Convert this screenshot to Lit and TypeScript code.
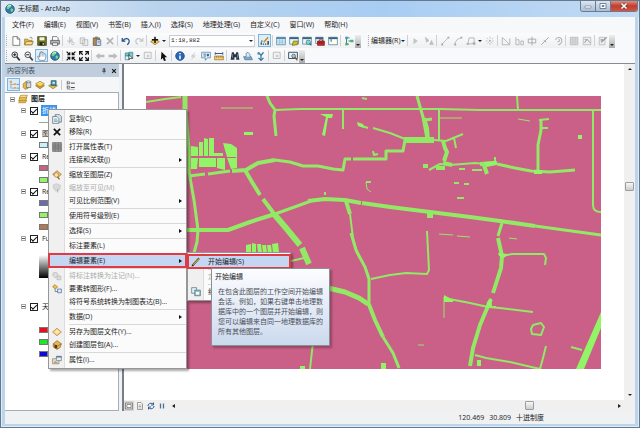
import { LitElement, html, svg, css, nothing } from "lit";
import { customElement, property } from "lit/decorators.js";
import { classMap } from "lit/directives/class-map.js";

const icons: Record<string, unknown> = {
  page: svg`<path d="M3 1h7l4 4v10H3z" fill="#fff" stroke="#444"/><path d="M10 1v4h4" fill="none" stroke="#444"/>`,
  open: svg`<path d="M1 14V5h5l1 2h6v7z" fill="#e8b840" stroke="#8a6414"/><path d="M1 14l3-5h11l-3 5z" fill="#ffe08a" stroke="#8a6414"/><path d="M9 3c2-2 4-1 4 2" fill="none" stroke="#555"/>`,
  save: svg`<path d="M1 1h14v14H1z" fill="#6d7424" stroke="#30340c"/><path d="M4 2h8v5H4z" fill="#f2f4e0"/><path d="M4 10h8v5H4z" fill="#262814"/><path d="M9 11h2v3H9z" fill="#ddd"/>`,
  print: svg`<path d="M4 7V1h7l2 2v4" fill="#fff" stroke="#444"/><path d="M1 7h14v6H1z" fill="#b9b9b9" stroke="#333"/><path d="M4 11h8v4H4z" fill="#fff" stroke="#333"/>`,
  cut: svg`<path d="M6 1v9M10 4L5 12M2 8h9" fill="none" stroke="#c4c4c4" stroke-width="2"/><circle cx="11" cy="12" r="2" fill="none" stroke="#c4c4c4" stroke-width="1.5"/>`,
  copyGray: svg`<path d="M2 3h7v9H2zM6 6h8v9H6z" fill="#eee" stroke="#bbb" stroke-width="1.5"/>`,
  paste: svg`<path d="M2 3h10v12H2z" fill="#a88a5c" stroke="#5b452a"/><path d="M5 1h4v3H5z" fill="#777"/><path d="M7 6h7v9H7z" fill="#dfe8f7" stroke="#44556b"/><path d="M9 9h4M9 11h4" stroke="#5b78a5"/>`,
  xGray: svg`<path d="M3 3l10 10M13 3L3 13" stroke="#b4b4b4" stroke-width="2.4"/>`,
  undo: svg`<path d="M2 3v5h5" fill="none" stroke="#1f4f88" stroke-width="2"/><path d="M3 8c3-6 11-4 10 1 0 2-1 3-3 5" fill="none" stroke="#1f4f88" stroke-width="2"/>`,
  redo: svg`<path d="M14 3v5H9M13 8C10 2 2 4 3 9c0 2 1 3 3 4" fill="none" stroke="#c6c6c6" stroke-width="2"/>`,
  add: svg`<path d="M8 5l7 4-7 5-7-5z" fill="#f0c85c" stroke="#8a6a1c"/><path d="M8 1v10M3 6h10" stroke="#111" stroke-width="2.4"/>`,
  sketch: svg`<path d="M1 13h11M2 8h3M1 11h3" stroke="#444" stroke-dasharray="2 1.5" stroke-width="2"/><path d="M6 10l7-8" stroke="#c98b24" stroke-width="2.4"/><path d="M13 8v6" stroke="#222" stroke-width="2"/>`,
  table: svg`<path d="M1 2h14v12H1z" fill="#f5fbff" stroke="#2e688f"/><path d="M1 2h14v3H1z" fill="#4485ae"/><path d="M1 8h14M1 11h14M6 3v11M10 3v11" stroke="#6eaacb"/>`,
  catalog: svg`<path d="M1 2h14v11H1z" fill="#eef6fb" stroke="#2e688f"/><path d="M1 2h14v3H1z" fill="#35637f"/><path d="M5 15l2-7h8l-2 6z" fill="#c6bf2e" stroke="#686513"/>`,
  search: svg`<path d="M1 2h14v11H1z" fill="#eef6fb" stroke="#2e688f"/><path d="M1 2h14v3H1z" fill="#35637f"/><circle cx="10" cy="10" r="3.5" fill="#90d4c4" stroke="#217c75"/><path d="M12 12l3 3" stroke="#217c75" stroke-width="2"/>`,
  toolbox: svg`<path d="M1 2h12v10H1z" fill="#eef6fb" stroke="#2e688f"/><path d="M1 2h12v3H1z" fill="#35637f"/><path d="M4 8h11v7H4z" fill="#c92727" stroke="#811010"/><path d="M7 8V6h5v2M4 11h11" fill="none" stroke="#611"/>`,
  windowIcon: svg`<path d="M1 2h14v12H1z" fill="#fffdf0" stroke="#2e688f"/><path d="M1 2h14v3H1z" fill="#35637f"/><path d="M4 4h2v5H4z" fill="#4485ae"/>`,
  model: svg`<path d="M4 3v10M4 3h5M4 13h4M7 8h8" stroke="#3a8a6c" stroke-width="1.6"/><path d="M2 1h4v4H2z" fill="#4a93c5"/><path d="M2 11h4v4H2z" fill="#58a860"/><path d="M10 6h5v4h-5z" fill="#50b07c"/>`,
  zoomIn: svg`<circle cx="6" cy="6" r="4.5" fill="#f2f9ff" stroke="#333" stroke-width="1.5"/><path d="M9 9l5 6" stroke="#333" stroke-width="2.6"/><path d="M3.5 6h5M6 3.5v5" stroke="#111" stroke-width="1.5"/>`,
  zoomOut: svg`<circle cx="6" cy="6" r="4.5" fill="#f2f9ff" stroke="#444" stroke-width="1.5"/><path d="M9 9l5 6" stroke="#444" stroke-width="2.6"/><path d="M3.5 6h5" stroke="#111" stroke-width="1.5"/>`,
  hand: svg`<path d="M4 15L1 9c0-2 2-1 3 1V4c0-2 2-2 2 0V2c0-2 2-2 2 0v1c1-2 3-1 3 1v1c1-1 3-1 3 1v5l-2 4z" fill="#fff" stroke="#496578"/><path d="M6 4v5M8.500 3v6M11 5v4" stroke="#7891a2"/>`,
  globe: svg`<circle cx="8" cy="8" r="7" fill="#2b7ba6" stroke="#1c4a70"/><path d="M3 5c2-4 6-4 7-2 0 3-3 2-4 5-2 1-4-1-3-3zM9 8c3-2 5 0 4 2-1 3-4 3-4 1z" fill="#7ed28b"/><path d="M4 4q3-3 6-1" stroke="#e1fff1" stroke-width="1.5" fill="none"/>`,
  shrink: svg`<path d="M1 1l5 5M15 1l-5 5M1 15l5-5M15 15l-5-5M6 2v4H2M10 2v4h4M6 14v-4H2M10 14v-4h4" fill="none" stroke="#111" stroke-width="1.8"/>`,
  expand: svg`<path d="M1 1l5 5M15 1l-5 5M1 15l5-5M15 15l-5-5M1 6V1h5M10 1h5v5M1 10v5h5M15 10v5h-5" fill="none" stroke="#111" stroke-width="1.8"/>`,
  backGray: svg`<path d="M1 8l6-5v3h8v4H7v3z" fill="#bbb"/>`,
  fwdGray: svg`<path d="M15 8L9 3v3H1v4h8v3z" fill="#bbb"/>`,
  selectFeat: svg`<path d="M2 3h6v5H2zM8 2h6v9H8z" fill="#7dcbd1" stroke="#29747c"/><path d="M2 8h6v6H2z" fill="#e9f4f5" stroke="#29747c"/><path d="M8 6l6 6H9l-1 2z" fill="#fff" stroke="#222"/>`,
  boxGray: svg`<path d="M2 2h11v10H2z" fill="#f4f4f4" stroke="#bbb" stroke-width="1.5"/><path d="M6 6h4v4H6z" fill="#ccc"/>`,
  cursor: svg`<path d="M4 1l9 9H9l2 5-3 1-2-5-3 3z" fill="#111"/>`,
  info: svg`<circle cx="8" cy="8" r="7" fill="#2967b4" stroke="#163f78"/><path d="M8 7v6M8 3v2" stroke="#fff" stroke-width="2.4"/>`,
  bolt: svg`<path d="M12 1L4 9h4l-4 6 9-8H9z" fill="#ccc"/>`,
  popup: svg`<path d="M1 2h14v9h-5l-3 4v-4H1z" fill="#e4f0fa" stroke="#3c7097"/><path d="M4 5h4M4 8h4M10 5h2v3h-2z" stroke="#3c7097" stroke-width="1.5"/>`,
  ruler: svg`<path d="M1 8h14v6H1z" fill="#f3cf79" stroke="#8d6520"/><path d="M4 8v3M7 8v3M10 8v3M13 8v3" stroke="#8d6520"/><path d="M2 4h12M2 2v4M14 2v4" stroke="#345b91" stroke-width="1.6"/>`,
  binoculars: svg`<path d="M3 2h3l1 3h2l1-3h3l2 12h-5v-4H7v4H1z" fill="#263445"/><path d="M4 5v6M12 5v6" stroke="#87a4be"/>`,
  route: svg`<path d="M1 9h12l2 5H3z" fill="#7ea8c8" stroke="#376b91"/><path d="M5 9V4l3-2 3 3v4" fill="#d6ebf7" stroke="#376b91"/>`,
  xy: svg`<path d="M4 2l4 5 4-5M8 7v8M4 11l4 4 4-4" fill="none" stroke="#3878a5" stroke-width="2"/><circle cx="4" cy="4" r="2" fill="#4294c8"/>`,
  viewer: svg`<path d="M1 2h14v10H1z" fill="#eaf3f8" stroke="#3c4d5b" stroke-width="1.5"/><circle cx="9" cy="8" r="3" fill="#9bc7e0" stroke="#394b5b"/><path d="M11 10l4 5" stroke="#8c572d" stroke-width="2"/>`,
  edTri: svg`<path d="M4 3l7 5-7 5z" fill="#c4c4c4"/>`,
  edTriA: svg`<path d="M2 2l6 5-4 3zM9 14l3-7 3 7M10 12h4" fill="#bbb" stroke="#bbb"/>`,
  edLine: svg`<path d="M3 13L13 3" stroke="#bbb" stroke-width="1.5"/><path d="M2 12h3v3H2zM12 1h3v3h-3z" fill="#aaa"/>`,
  edArc: svg`<path d="M3 14Q4 4 14 3" fill="none" stroke="#bbb" stroke-width="1.5"/><path d="M2 12h3v3H2zM12 1h3v3h-3z" fill="#aaa"/>`,
  edPoly: svg`<path d="M3 13L5 3h8v9z" fill="none" stroke="#b5b5b5" stroke-width="1.5"/><path d="M1 11h3v3H1zM11 10h4v4h-4z" fill="#aaa"/>`,
  edStar: svg`<path d="M8 1v14M1 8h14M3 3l10 10M13 3L3 13" stroke="#aaa" stroke-dasharray="3 2"/>`,
  edShape: svg`<path d="M2 2v12h12V4M3 3l10 10" fill="none" stroke="#b5b5b5" stroke-width="1.5"/>`,
  edSteps: svg`<path d="M3 2v12h5V6H4M11 14V8h4v6z" fill="none" stroke="#b5b5b5" stroke-width="1.5"/>`,
  edCross: svg`<path d="M8 1v14M2 5h12v6H2z" fill="none" stroke="#aaa" stroke-width="1.5"/>`,
  edSplit: svg`<path d="M2 14L14 2M6 7l4 3" stroke="#aaa" stroke-width="1.6"/>`,
  edRotate: svg`<path d="M4 6c2-6 11-4 10 2 0 5-5 6-6 6M9 5c3 2 1 5-2 4" fill="none" stroke="#b5b5b5" stroke-width="1.8"/>`,
  edTable: svg`<path d="M2 2h12v12H2z" fill="#e5e5e5" stroke="#aaa"/><path d="M2 5h12M2 8h12M2 11h12M6 2v12M10 2v12" stroke="#bbb"/>`,
  edSketch: svg`<path d="M2 2h12v12H2z" fill="#eee" stroke="#aaa"/><path d="M4 11l4-6 5 6M4 5l3 2" fill="none" stroke="#999" stroke-width="1.5"/>`,
  edForm: svg`<path d="M2 2h9v12H2z" fill="#eee" stroke="#aaa"/><path d="M5 10l9-8M4 6h4" stroke="#999" stroke-width="2"/>`,
  listTree: svg`<path d="M3 2v11h6M3 7h5" fill="none" stroke="#7b8d9b"/><path d="M1 1h4v3H1zM8 5h3v3H8zM8 11h3v3H8z" fill="#e7a33e"/><path d="M12 7h4M12 13h4" stroke="#555"/>`,
  cylinder: svg`<path d="M2 6l5-4 3 3v8l-5 2-3-3z" fill="#e8bb3d" stroke="#8d6e20"/><path d="M7 3h7v9H7z" fill="#d4d7dc" stroke="#555b65"/><ellipse cx="10.500" cy="3" rx="3.500" ry="1.500" fill="#fff" stroke="#555b65"/>`,
  layerY: svg`<path d="M8 5l7 4-7 5-7-5z" fill="#c9a12f" stroke="#84671a"/><path d="M8 2l7 4-7 5-7-5z" fill="#f6d865" stroke="#957424"/>`,
  layerB: svg`<path d="M1 9l6-3 8 3-7 5z" fill="#eac153" stroke="#84671a"/><path d="M5 1h8v8H5z" fill="#438aa8" stroke="#295260"/><path d="M7 3h4v3H7z" fill="#c7ecf4"/>`,
  options: svg`<path d="M2 1v14h12" fill="none" stroke="#999"/><path d="M2 3h4v3H2zM2 10h4v3H2z" fill="#fff" stroke="#333"/><path d="M8 5h6M8 12h6" stroke="#333" stroke-width="1.400"/>`,
  layers: svg`<path d="M4 2h11l-2 5H2z" fill="#f7dc83" stroke="#a37822"/><path d="M3 6h11l-2 5H1z" fill="#f0c55a" stroke="#a37822"/><path d="M3 10h11l-2 4H1z" fill="#e9b43d" stroke="#a37822"/>`,
  copy: svg`<path d="M5 1h7l3 3v9H5z" fill="#d6e6ef" stroke="#3e5c6c"/><path d="M1 4h7l3 3v8H1z" fill="#eef6f9" stroke="#3e5c6c"/><path d="M3 8h5M3 10h6M3 12h6" stroke="#64879a"/>`,
  x: svg`<path d="M3 3l10 10M13 3L3 13" stroke="#111" stroke-width="2.800"/>`,
  grid: svg`<path d="M1 1h14v14H1z" fill="#999" stroke="#555"/><path d="M1 5h14M1 8h14M1 11h14M5 1v14M10 1v14" stroke="#666"/>`,
  zoomLayer: svg`<path d="M8 1l7 6-6 5-8-5z" fill="#f4b76b" stroke="#9b6a27"/><circle cx="7" cy="8" r="3.500" fill="#f7e3b4" stroke="#a0793e"/><path d="M9 11l3 4" stroke="#94632b" stroke-width="2"/>`,
  zoomGray: svg`<path d="M2 3l5-2 7 3-2 7-6 2-4-5z" fill="#d9d9d9" stroke="#c0c0c0"/><path d="M9 9v6" stroke="#bbb" stroke-width="2"/>`,
  annoGray: svg`<path d="M2 3l5-1 3 5-5 4-4-4zM8 8h6v6H8z" fill="#ddd" stroke="#c2c2c2" stroke-width="1.500"/>`,
  toGraphic: svg`<path d="M1 4l4-3 4 4-4 3z" fill="#f2bd43" stroke="#9c6d16"/><path d="M9 8h6v6H9z" fill="#dcecfa" stroke="#315b8d"/><path d="M5 8v4h4" fill="none" stroke="#315b8d"/>`,
  diamond: svg`<path d="M8 2l7 6-7 6-7-6z" fill="#f7cf82" stroke="#a87428"/><path d="M8 4l4 4-4 3-4-3z" fill="#fce6b4"/>`,
  pack: svg`<path d="M8 1l7 5-2 6-5 3-6-4V6z" fill="#e9b351" stroke="#825a1c"/><path d="M2 6l6 4 7-4M8 10v5" fill="none" stroke="#825a1c"/><path d="M4 8h4v5H4z" fill="#493719"/>`,
  props: svg`<path d="M1 6h10v8H1z" fill="#f7ecd0" stroke="#75654b"/><path d="M7 2h8v7H7z" fill="#e5edf5" stroke="#5c6876"/><path d="M7 3h8" stroke="#4a6f9c" stroke-width="2"/><path d="M3 10h4M3 12h6" stroke="#777"/>`,
  pencil: svg`<path d="M2 14L13 2" stroke="#5b4a24" stroke-width="3"/><path d="M3 12.500L13 2.500" stroke="#f3ca5b" stroke-width="1.500"/><path d="M1 15l1-3 2 2z" fill="#222"/>`,
  template: svg`<path d="M1 1h8v9H1z" fill="#e0eef3" stroke="#3e6878"/><path d="M6 5h9v9H6z" fill="#9bc5cc" stroke="#356772"/><path d="M8 8h5v4H8z" fill="#fff"/>`,
  dataView: svg`<path d="M1 2h14v12H1z" fill="#ddd" stroke="#444"/><path d="M4 5h8v6H4z" fill="#fff" stroke="#444"/>`,
  layoutView: svg`<path d="M3 1h7l3 3v11H3z" fill="#fff" stroke="#444"/><path d="M5 6h6M5 9h6M5 12h6" stroke="#555"/>`,
  refresh: svg`<path d="M2 8c0-6 8-7 11-3M14 8c0 6-8 7-11 3M13 1v5H8M3 15v-5h5" fill="none" stroke="#2c5c92" stroke-width="2"/>`,
  pause: svg`<path d="M5 3v10M11 3v10" stroke="#4a7290" stroke-width="2.600"/>`,
  pin: svg`<path d="M5 2h6M6 2v7M10 2v7M9 2v7M3 9h10M8 9v6" stroke="#222" stroke-width="1.500"/>`,
};

const icon = (name: string) =>
  html`<svg class="icon" viewBox="0 0 16 16" aria-hidden="true">${icons[name]}</svg>`;

const baseStyles = css`
  * { box-sizing: border-box; }
  button {
    display: flex; align-items: center; justify-content: center;
    margin: 0; padding: 0; border: 0; background: none;
    font: inherit; color: inherit; white-space: nowrap;
  }
  .icon { display: block; width: 10px; height: 10px; flex: none; }
`;

// Roads: [stroke width, path data] in map coordinates.
const roads: [number, string][] = [
  [2, "M146 102L165 99 181 97"],
  [5, "M185 96v14"],
  [3, "M186 110L189 150V172L194 200 198 230 197 242 194 253"],
  [1, "M221 108h32M518 119l12 2M439 234l14 1M457 236l13 1M509 238l8 1M418 345h6M440 118h22"],
  [3, "M267 96L270 103 275 110M275 110L274 116 276 136"],
  [2, "M275 110L300 109H440L480 110 601 110"],
  [2, "M343 109v20M439 110v30M517 96l1 14M358 124l4 2 6 2"],
  [3, "M189 176L205 174M208 174L230 171"],
  [4, "M232 171L246 170 258 163 275 160"],
  [3, "M275 160L290 162 303 166 318 166 333 169 343 170 345 159H351M353 159H386V151H403L405 140"],
  [2, "M373 128L390 133 405 139"],
  [6, "M404 140h30"],
  [3, "M417 96L423 117 427 139M425 120l7-1"],
  [4, "M424 118l3 10 1 12"],
  [2, "M434 140L446 141 463 134M452 138h2l2 10"],
  [4, "M443 141L445 148 447 152 444 161"],
  [2, "M429 170L440 164 450 165 475 163 485 164"],
  [4, "M423 166h5M436 168h9M443 163l9 2"],
  [4, "M480 164L497 163M484 165l3 9"],
  [2, "M495 157v6M472 170h10M459 169h6M454 183h5M464 184h5M457 198h7"],
  [3, "M497 164L515 168 531 171 550 172 575 170M538 171L538 145 541 130V120"],
  [2, "M539 120l10-1M542 128h6"],
  [2, "M593 111V205Q593 212 601 212"],
  [4, "M172 230H228L250 222 275 214"],
  [3, "M275 214L300 205 311 201"],
  [4, "M308 201L325 199 345 200 361 203"],
  [4, "M362 203L390 207 430 212 470 217 500 221 535 226"],
  [3, "M535 226L601 235"],
  [4, "M245 170L252 182 260 195M263 199L275 215"],
  [6, "M274 214L286 228 300 245M302 248L309 264"],
  [2, "M291 261L304 258"],
  [4, "M346 201L350 214"],
  [2, "M350 214L353 238 357 253 365 267 369 278"],
  [3, "M351 233L356 250 365 267 369 279V302"],
  [5, "M328 288L345 292 359 298 368 304"],
  [4, "M368 302L375 320 383 337"],
  [3, "M383 337L393 353 399 368"],
  [2, "M371 279L390 275 406 273 427 274 429 270 427 231"],
  [6, "M430 212v6"],
  [1, "M444 297v21"],
  [2, "M444 298L470 303 488 307 500 308 533 312"],
  [2, "M313 342L310 369"],
  [3, "M502 223L498 236"],
  [4, "M498 238L502 256 501 268 493 293M491 299L480 325 473 348 470 366"],
  [2, "M502 256L512 254H544L546 258 545 265"],
  [2, "M475 355L486 358 510 362 540 369M546 346L543 358 540 369"],
  [2, "M488 307h8M533 325L541 323 544 327 541 335 532 334 531 329Z"],
  [2, "M571 347l11 3M362 98l5 1M366 182h5M373 151l1 4 4-1M325 192v3"],
  [1, "M366 182l1 7 4 3"],
];

const fields = [
  "M191 146l7 1v9h-7z", "M199 142h4v14h-4z", "M204 138l4 1v17h-4z", "M209 138h5v18h-5z",
  "M191 158h7l-1 11h-6z", "M199 158h17v9h-17z", "M214 153h9v3h-9z", "M217 158h8v12l-8-2z",
  "M223 143l8 1 6 4v20l-6 1-4-11h9v-1h-9z",
  "M244 132h9v3h-9z", "M320 114h13l-1 4h-4l-3 18-3-1 4-18z", "M357 122l6 2 1 4-6-2z",
  "M444 295l9 5v2h-9z", "M484 162l12-1v4l-9 2z", "M534 170h8v4h-8z",
  "M498 253l10 1-4 4-5-2z", "M487 302l4-4 1 8-6 2z", "M381 363h5v6h-5z", "M477 360h4v6h-4z",
  "M601 312v16l-17 41h-8z", "M578 135h4v4h-4z", "M300 366h5v3h-5z",
  "M246 245l5-1v9h-5z", "M252 243l4 1v9h-4z", "M257 244h4l1 9h-4z", "M262 245h4l1 8h-4z",
  "M267 245h4l1 8h-4z", "M272 244l6-1 1 10h-6z",
];

@customElement("arc-map-canvas")
class ArcMapCanvas extends LitElement {
  static styles = css`
    :host { display: block; }
    .map { display: block; width: 100%; }
  `;
  render() {
    return html`<svg class="map" viewBox="146 96 455 273" role="img" aria-label="地图">
      <rect x="146" y="96" width="455" height="273" fill="#ca5f87" />
      <g fill="none" stroke="#92e965" stroke-linejoin="round">
        ${roads.map(([w, d]) => svg`<path d=${d} stroke-width=${w} />`)}
      </g>
      <g fill="#92f566">${fields.map((d) => svg`<path d=${d} />`)}</g>
    </svg>`;
  }
}

type Row = { sep?: boolean; icon?: string; text?: string; sub?: boolean; off?: boolean; hot?: boolean };

const contextRows: Row[] = [
  { icon: "copy", text: "复制(C)" },
  { icon: "x", text: "移除(R)" },
  { sep: true },
  { icon: "grid", text: "打开属性表(T)" },
  { text: "连接和关联(J)", sub: true },
  { sep: true },
  { icon: "zoomLayer", text: "缩放至图层(Z)" },
  { icon: "zoomGray", text: "缩放至可见(M)", off: true },
  { text: "可见比例范围(V)", sub: true },
  { sep: true },
  { text: "使用符号级别(E)" },
  { sep: true },
  { text: "选择(S)", sub: true },
  { sep: true },
  { text: "标注要素(L)" },
  { sep: true },
  { text: "编辑要素(E)", sub: true, hot: true },
  { sep: true },
  { icon: "annoGray", text: "将标注转换为注记(N)...", off: true },
  { icon: "toGraphic", text: "要素转图形(F)..." },
  { text: "将符号系统转换为制图表达(B)..." },
  { sep: true },
  { text: "数据(D)", sub: true },
  { sep: true },
  { icon: "diamond", text: "另存为图层文件(Y)..." },
  { icon: "pack", text: "创建图层包(A)..." },
  { sep: true },
  { icon: "props", text: "属性(I)..." },
];

const editRows: Row[] = [
  { icon: "pencil", text: "开始编辑(S)", hot: true },
  { sep: true },
  { text: "定义新要素类型(N)...", off: true },
  { sep: true },
  { icon: "template", text: "组织要素模板(O)..." },
];

@customElement("popup-menu")
class PopupMenu extends LitElement {
  @property({ attribute: false }) rows: Row[] = [];
  static styles = [baseStyles, css`
    :host {
      display: block; padding: 2px 0; border: 1px solid #979797;
      background: linear-gradient(90deg, #f0f0f0 15px, #dcdcdc 15px, #dcdcdc 16px, #fbfbfb 16px);
      box-shadow: 2px 2px 2px #0005;
    }
    .row { position: relative; width: 100%; height: 13px; justify-content: flex-start; gap: 5px; }
    .row.off { color: #aaa; }
    .row.hot { background: #c5d6f3; outline: 2px solid #e13a45; outline-offset: -1px; z-index: 1; }
    .slot { display: flex; justify-content: center; width: 15px; flex: none; }
    .text { flex: 1; text-align: left; }
    .arrow { margin-right: 4px; border: 2px solid transparent; border-left: 3px solid #111; border-right: 0; }
    .sep { height: 2px; margin-left: 20px; border-bottom: 1px solid #d8d8d8; }
  `];
  render() {
    return this.rows.map((r) => r.sep
      ? html`<div class="sep" role="separator"></div>`
      : html`<button class=${classMap({ row: true, off: !!r.off, hot: !!r.hot })} role="menuitem">
          <span class="slot">${r.icon ? icon(r.icon) : nothing}</span>
          <span class="text">${r.text}</span>
          ${r.sub ? html`<span class="arrow"></span>` : nothing}
        </button>`);
  }
}

type Layer = { name: string; kind?: string; swatches: string[]; selected?: boolean };
const layers: Layer[] = [
  { name: "折线", swatches: ["line"], selected: true },
  { name: "图斑", swatches: ["#c5f2fb"] },
  { name: "Reclass", swatches: ["#ca5f87", "#92f566"] },
  { name: "Reclass", swatches: ["#6b68b5", "#92f566", "#b8764f"] },
  { name: "Fusion", kind: "ramp", swatches: [] },
  { name: "天地图", kind: "bands", swatches: ["#f00b18", "#12ee22", "#0a0ad8"] },
];

@customElement("layer-panel")
class LayerPanel extends LitElement {
  static styles = [baseStyles, css`
    :host { display: flex; flex-direction: column; min-width: 0; overflow: hidden; }
    .head { display: flex; align-items: center; gap: 4px; height: 13px; padding: 0 2px; background: #bfcddd; color: #3f5063; }
    .title { flex: 1; font: inherit; margin: 0; }
    .head .icon { width: 6px; height: 6px; }
    .tools { display: flex; align-items: center; height: 15px; padding-left: 2px; background: #f5f6f8; }
    .tool { width: 13px; height: 13px; }
    .tool.on { background: #d9ecfb; outline: 1px solid #7db4dd; outline-offset: -1px; }
    .line { width: 1px; height: 10px; margin: 0 2px; background: #c4c8cd; }
    .tree { flex: 1; margin: 0; padding: 0 0 0 5px; list-style: none; background: #fff; border: 1px solid #a7adb5; border-left: 0; }
    .sub { margin: 0; padding: 0 0 0 11px; list-style: none; }
    .node { display: flex; align-items: center; height: 11px; gap: 4px; white-space: nowrap; }
    .root { height: 12px; gap: 3px; }
    .fold { width: 5px; height: 5px; border: 1px solid #a5a5a5; }
    .fold::before { content: ""; width: 3px; height: 1px; background: #555; }
    .label { display: flex; align-items: center; gap: 3px; }
    .check { appearance: none; width: 8px; height: 8px; margin: 0; border: 1px solid #222; background: #fff; display: flex; align-items: center; justify-content: center; }
    .check:checked::before { content: ""; width: 5px; height: 2px; border: solid #111; border-width: 0 0 1px 1px; transform: rotate(-45deg); }
    .name { padding: 0 1px; line-height: 11px; }
    .name.on { background: #3a94ee; color: #fff; }
    .swatches { display: grid; grid-auto-rows: 12px; align-items: center; padding-left: 18px; }
    .swatches.bands { padding-top: 12px; }
    .swatch { width: 9px; height: 6px; border: 1px solid #777; }
    .swatch.thin { height: 1px; border: 0; background: #9aa89a; }
    .ramp { width: 9px; height: 23px; margin: 11px 0 23px 18px; background: linear-gradient(#fff, #000); }
  `];
  render() {
    return html`
      <div class="head"><h2 class="title">内容列表</h2>${icon("pin")}${icon("x")}</div>
      <div class="tools">
        ${["listTree", "cylinder", "layerY", "layerB"].map((n, i) =>
          html`<button class=${classMap({ tool: true, on: i === 0 })}>${icon(n)}</button>`)}
        <span class="line"></span><button class="tool">${icon("options")}</button>
      </div>
      <ul class="tree">
        <li>
          <div class="node root"><button class="fold" aria-label="折叠"></button>${icon("layers")}<b>图层</b></div>
          <ul class="sub">${layers.map((l) => html`<li>
            <div class="node">
              <button class="fold" aria-label="折叠"></button>
              <label class="label"><input class="check" type="checkbox" checked />
                <span class=${classMap({ name: true, on: !!l.selected })}>${l.name}</span></label>
            </div>
            ${l.kind === "ramp" ? html`<div class="ramp"></div>` : html`
              <div class=${classMap({ swatches: true, bands: l.kind === "bands" })}>
                ${l.swatches.map((c) => c === "line"
                  ? html`<span class="swatch thin"></span>`
                  : html`<span class="swatch" style="background:${c}"></span>`)}
              </div>`}
          </li>`)}</ul>
        </li>
      </ul>`;
  }
}

@customElement("app-root")
class AppRoot extends LitElement {
  static styles = [baseStyles, css`
    :host {
      box-sizing: border-box; position: relative; display: flex; flex-direction: column; min-height: 100vh;
      padding: 0 5px 4px; background: #bcd5ec; color: #1b1b1b; overflow: hidden;
      box-shadow: inset 0 0 0 1px #66788b, inset 0 0 0 2px #dcecf9;
      font: 7px/10px "Open Sans", "Noto Sans CJK SC", sans-serif;
    }
    .titlebar { display: flex; align-items: center; height: 17px; margin: 0 -4px; padding-left: 4px; border-top: 1px solid #66788b; background: linear-gradient(90deg, #dfeaf5, #b9d3ee 25%, #a8cdf3 60%, #c2daf2); }
    .caption { flex: 1; margin: 0 0 0 3px; font: inherit; }
    .controls { display: flex; align-self: flex-start; height: 11px; margin-right: 1px; border: 1px solid #687d93; border-top: 0; border-radius: 0 0 3px 3px; overflow: hidden; }
    .ctl { width: 15px; background: linear-gradient(#dae6f2, #a9bed5); border-right: 1px solid #687d93; }
    .ctl .icon { width: 8px; height: 8px; }
    .ctl.close { width: 26px; border: 0; background: linear-gradient(#dd8f83, #c03c2c 50%, #d8543f); }
    .menubar { display: flex; align-items: center; gap: 10px; height: 16px; padding-left: 7px; background: #f7f8fa; }
    .bars { background: #f8f9fa; border-bottom: 1px solid #858c94; }
    .bar { display: flex; align-items: center; height: 15px; }
    .group { display: flex; align-items: center; height: 15px; padding-left: 1px; background: linear-gradient(#fcfcfd, #eef0f2); }
    .grip { width: 1px; height: 11px; margin: 0 2px 0 0; border-left: 1px dotted #aaa; }
    .tool { width: 13px; height: 13px; }
    .tool.on { background: #dcedfb; outline: 1px solid #7fb2da; outline-offset: -1px; }
    .line { width: 1px; height: 11px; margin: 0 1px; background: #cdd1d6; }
    .drop { width: 6px; height: 11px; }
    .drop::after, .more::after { content: ""; border: 2px solid transparent; border-top: 2px solid #222; border-bottom: 0; }
    .more { width: 6px; height: 13px; align-self: flex-end; align-items: flex-end; padding-bottom: 2px; background: linear-gradient(#eee, #aaa); }
    .scale { width: 86px; height: 12px; margin: 0 3px 0 2px; padding: 0 1px; border: 1px solid #c9cdd2; background: #fff; appearance: none; font: 6px/10px "Liberation Mono", monospace; color: #222; }
    .combo { display: flex; align-items: center; margin: 0; }
    .combo .drop { margin-left: -10px; margin-right: 4px; }
    .editor { margin-left: 6px; }
    .body { flex: 1; display: grid; grid-template-columns: 114px minmax(0, 1fr); column-gap: 3px; background: #eff1f4; }
    .view { display: grid; grid-template-columns: minmax(0, 1fr) 11px; grid-template-rows: minmax(0, 1fr) 11px; border-left: 2px solid #777f88; background: #f0f0f0; }
    .canvas { padding: 32px 23px 31px 22px; background: #fff; }
    .vbar { display: flex; flex-direction: column; align-items: center; justify-content: space-between; padding: 4px 0; }
    .tri { border: 2px solid transparent; }
    .tri.up { border-bottom-color: #222; border-top: 0; }
    .tri.down { border-top-color: #222; border-bottom: 0; }
    .tri.left { border-right: 3px solid #222; border-left: 0; }
    .tri.right { border-left: 3px solid #222; border-right: 0; }
    .thumb { width: 9px; height: 9px; border: 1px solid #9c9c9c; border-radius: 1px; background: linear-gradient(#f8f8f8, #ccc); }
    .vbar .thumb { margin-bottom: 92px; }
    .hbar { display: flex; align-items: center; padding-right: 3px; gap: 1px; }
    .hbar .icon { width: 8px; height: 8px; }
    .mini { width: 10px; height: 10px; }
    .mini.on { background: #d5d5d5; }
    .hbar .left { margin-left: 4px; }
    .hbar .thumb { margin-left: auto; }
    .hbar .right { margin-left: 83px; }
    .status { display: flex; justify-content: flex-end; align-items: center; gap: 5px; height: 13px; padding-right: 91px; background: #f0f1f2; }
    .context { position: absolute; left: 48px; top: 109px; width: 139px; }
    .submenu { position: absolute; left: 187px; top: 252px; width: 104px; }
    .tip { position: absolute; left: 211px; top: 268px; width: 119px; padding: 3px 3px 8px; border: 1px solid #8b8f98; background: linear-gradient(#fdfdff, #cbd9ee); color: #4b4f58; box-shadow: 2px 2px 2px #0004; z-index: 2; }
    .tip-title { margin: 0 0 5px; font: inherit; color: #222; }
    .tip-text { margin: 0 0 0 3px; }
  `];

  tools(spec: string) {
    return spec.split(" ").map((n) => n === "|" ? html`<span class="line"></span>`
      : n === "v" ? html`<button class="drop" aria-label="更多"></button>`
      : n === "more" ? html`<button class="more" aria-label="选项"></button>`
      : html`<button class=${classMap({ tool: true, on: n === "hand" || n === "sketch" })}>${icon(n)}</button>`);
  }

  render() {
    const menus = ["文件(F)", "编辑(E)", "视图(V)", "书签(B)", "插入(I)", "选择(S)", "地理处理(G)", "自定义(C)", "窗口(W)", "帮助(H)"];
    return html`
      <header class="titlebar">
        ${icon("globe")}<h1 class="caption">无标题 - ArcMap</h1>
        <div class="controls">
          <button class="ctl" aria-label="最小化"><svg class="icon" viewBox="0 0 16 16"><path d="M2 8h12v4H2z" fill="#fff" stroke="#546478"/></svg></button>
          <button class="ctl" aria-label="最大化"><svg class="icon" viewBox="0 0 16 16"><path d="M2 3h12v10H2zM6 7h4v2H6z" fill="#fff" stroke="#546478" stroke-width="1.500"/></svg></button>
          <button class="ctl close" aria-label="关闭"><svg class="icon" viewBox="0 0 16 16"><path d="M3 3l10 10M13 3L3 13" stroke="#703030" stroke-width="6"/><path d="M3 3l10 10M13 3L3 13" stroke="#fff" stroke-width="3.500"/></svg></button>
        </div>
      </header>
      <nav class="menubar">${menus.map((m) => html`<button>${m}</button>`)}</nav>
      <div class="bars">
        <div class="bar">
          <div class="group"><span class="grip"></span>
            ${this.tools("page open save print | cut copyGray paste xGray | undo redo | add v")}
            <div class="combo"><input class="scale" aria-label="比例" value="1:18,882" /><button class="drop" aria-label="比例列表"></button></div>
            ${this.tools("sketch | table catalog search toolbox windowIcon | model more")}
          </div>
          <div class="group editor"><span class="grip"></span>
            <button>编辑器(R)</button>
            ${this.tools("v | edTri edTriA | edLine edArc edPoly v edStar | edShape edSteps edCross edSplit edRotate | edTable edSketch | edForm more")}
          </div>
        </div>
        <div class="bar">
          <div class="group"><span class="grip"></span>
            ${this.tools("zoomIn zoomOut hand globe | shrink expand | backGray fwdGray | selectFeat v boxGray | cursor | info bolt popup ruler | binoculars route xy | boxGray | viewer more")}
          </div>
        </div>
      </div>
      <main class="body">
        <layer-panel></layer-panel>
        <section class="view">
          <div class="canvas"><arc-map-canvas></arc-map-canvas></div>
          <div class="vbar"><span class="tri up"></span><span class="thumb"></span><span class="tri down"></span></div>
          <div class="hbar">
            <button class="mini on">${icon("dataView")}</button><button class="mini">${icon("layoutView")}</button>
            <button class="mini">${icon("refresh")}</button><button class="mini">${icon("pause")}</button>
            <span class="tri left"></span><span class="thumb"></span><span class="tri right"></span>
          </div>
        </section>
      </main>
      <footer class="status"><span>120.469</span><span>30.809</span><span>十进制度</span></footer>
      <popup-menu class="context" role="menu" .rows=${contextRows}></popup-menu>
      <popup-menu class="submenu" role="menu" .rows=${editRows}></popup-menu>
      <aside class="tip" role="tooltip">
        <h3 class="tip-title">开始编辑</h3>
        <p class="tip-text">在包含此图层的工作空间开始编辑会话。例如，如果右键单击地理数据库中的一个图层并开始编辑，则您可以编辑来自同一地理数据库的所有其他图层。</p>
      </aside>`;
  }
}
